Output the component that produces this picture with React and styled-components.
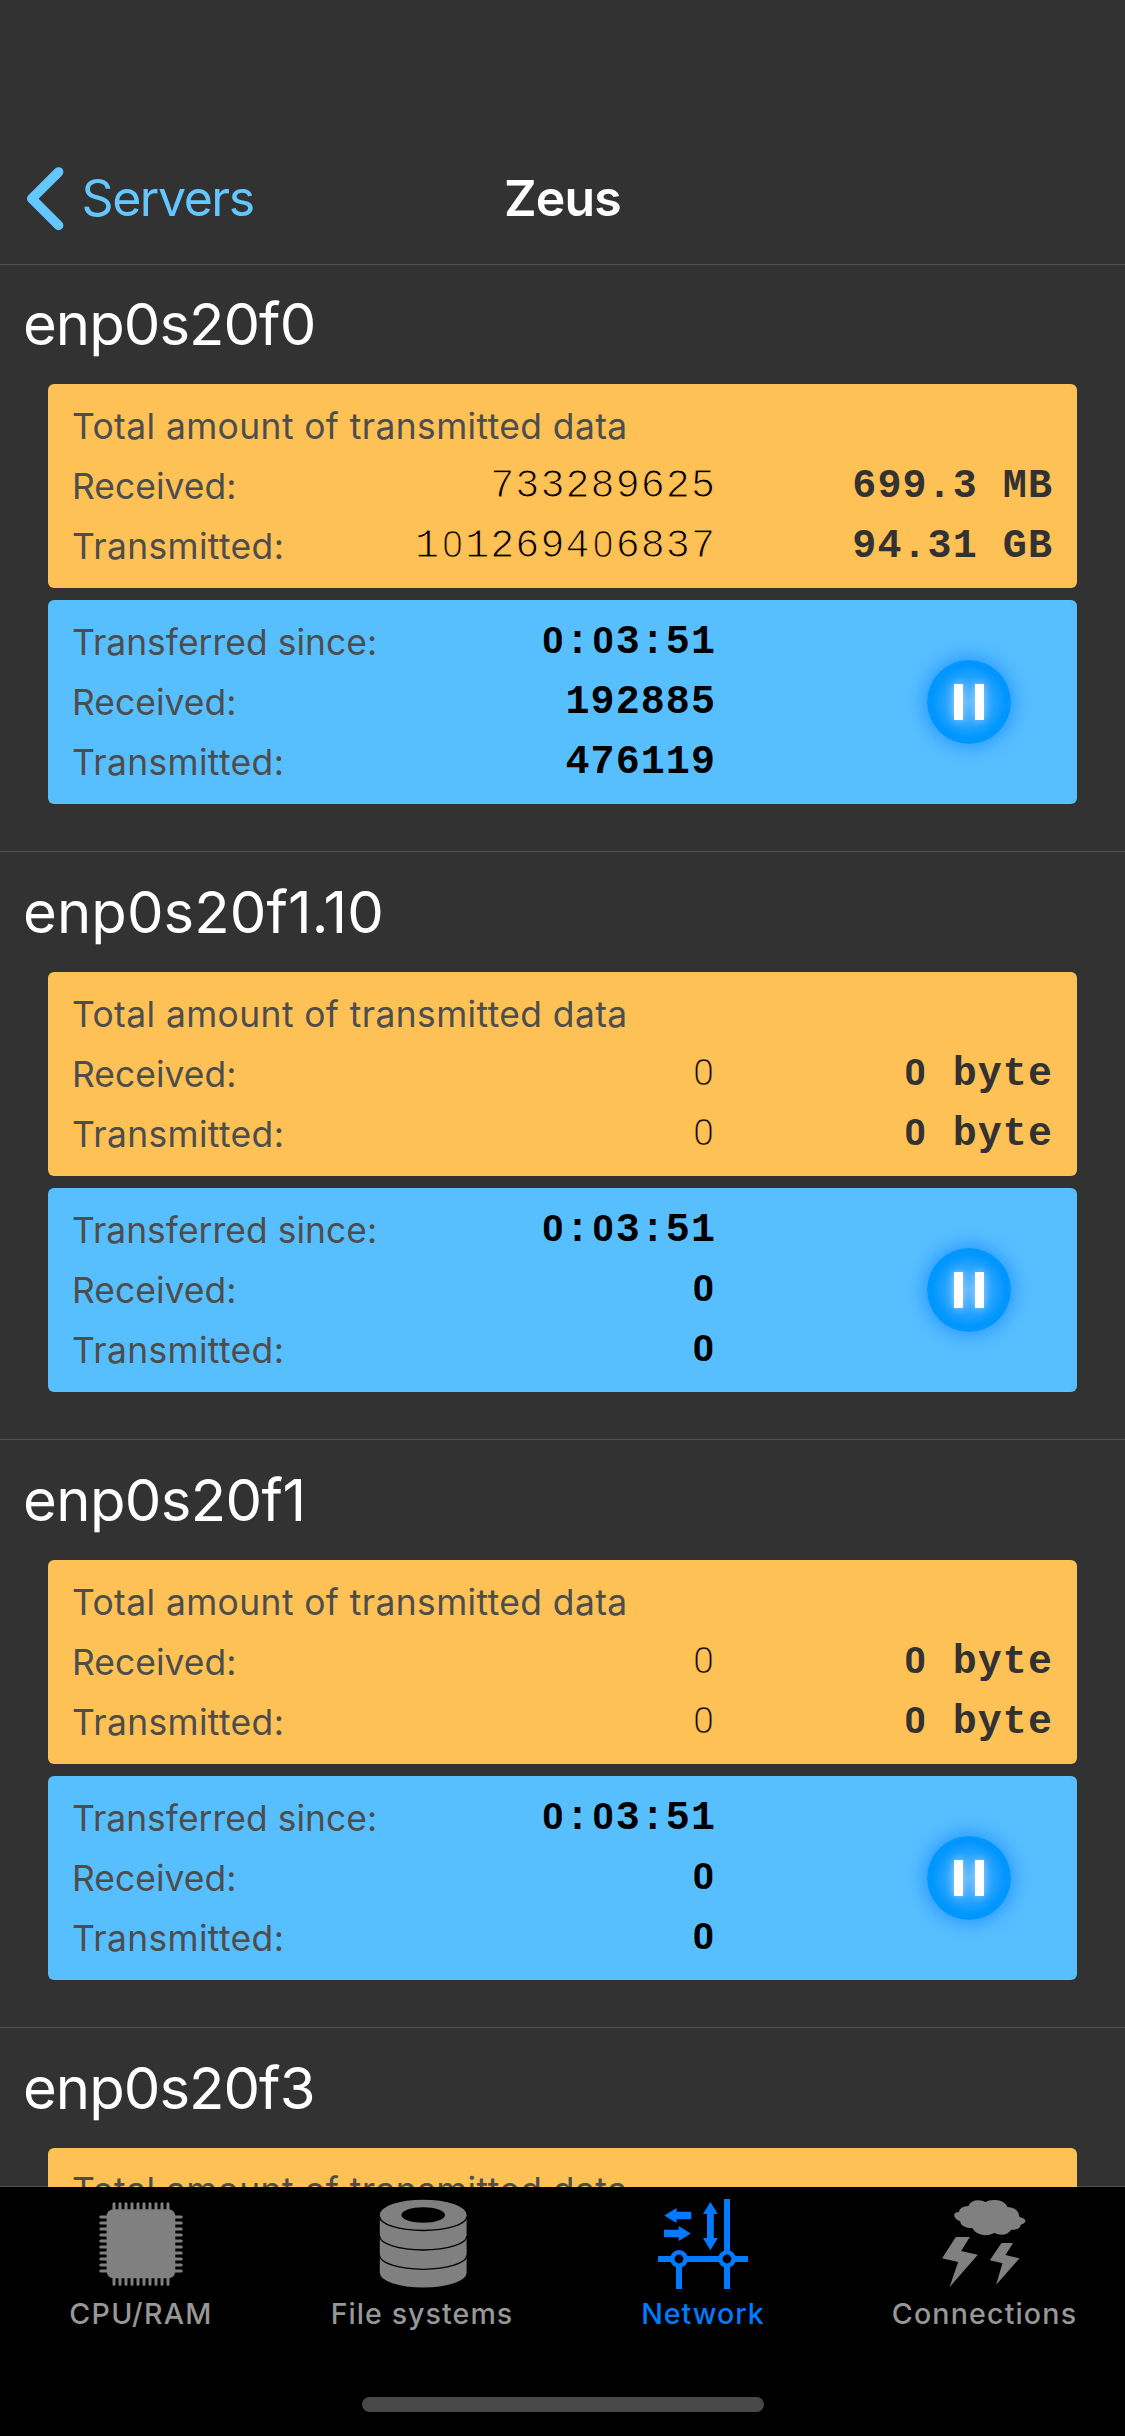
import React from 'react';
import styled, { createGlobalStyle } from 'styled-components';

const GlobalStyle = createGlobalStyle`
  * { box-sizing: border-box; }
  html, body { margin: 0; background: #323232; }
`;

const Screen = styled.div`
  display: flex;
  flex-direction: column;
  width: 1125px;
  height: 2436px;
  overflow: hidden;
  background: #323232;
  color: #fff;
  font-family: Inter, "Liberation Sans", sans-serif;
  white-space: nowrap;
`;

const Header = styled.header`
  flex: none;
  display: grid;
  grid-template-columns: 1fr auto 1fr;
  align-items: center;
  height: 265px;
  padding: 132px 24px 0;
  border-bottom: 1px solid #505050;
`;

const BackButton = styled.a`
  display: flex;
  align-items: center;
  gap: 13.5px;
  color: #64c8ff;
  font-size: 50px;
  line-height: 60px;
  letter-spacing: -1.45px;
`;

const Title = styled.h1`
  margin: 0;
  font-size: 50px;
  line-height: 60px;
  font-weight: 600;
  letter-spacing: -0.8px;
`;

const List = styled.main`
  flex: 1;
  min-height: 0;
  margin-top: -1px;
  overflow: hidden;
  background: linear-gradient(#505050, #505050) bottom / 100% 1px no-repeat;
`;

const Section = styled.section`
  display: flex;
  flex-direction: column;
  height: 588px;
  padding: 0 48px;
  border-bottom: 1px solid #505050;
`;

const Name = styled.h2`
  margin: 0 0 0 -25px;
  height: 120px;
  font-size: 58px;
  line-height: 120px;
  font-weight: 400;
  letter-spacing: ${(p) => p.$track}px;
`;

const Panels = styled.div`
  display: flex;
  flex-direction: column;
  gap: 12px;
`;

const Panel = styled.div`
  display: flex;
  justify-content: space-between;
  align-items: flex-start;
  height: 204px;
  padding: 13px 24px 11px;
  border-radius: 6px;
  background: ${(p) => p.$color};
`;

const Rows = styled.div`
  flex: 1;
`;

const Row = styled.div`
  display: grid;
  grid-template-columns: auto 1fr 337px;
  height: 60px;
  line-height: 60px;
`;

const TransferGrid = styled.div`
  display: grid;
  grid-template-columns: auto 1fr;
  grid-auto-rows: 60px;
  width: 644px;
  line-height: 60px;
`;

const Label = styled.span`
  color: #4d4d4d;
  font-size: 35.4px;
  letter-spacing: ${(p) => p.$track}px;
`;

const Value = styled.span`
  color: ${(p) => (p.$muted ? '#323232' : '#000')};
  font-family: "Liberation Mono", monospace;
  font-size: 40px;
  font-weight: ${(p) => (p.$thin ? 400 : 700)};
  letter-spacing: 1.08px;
  text-align: right;
  white-space: pre;
  -webkit-text-stroke: ${(p) => (p.$thin ? '1.05px #fec155' : '0')};
`;

/* A zero without the inner dot, as wide as the other figures. */
const Zero = styled.span`
  display: inline-block;
  width: 25.1px;
  line-height: 1;
  font-family: Roboto, sans-serif;
  font-size: 37px;
  font-weight: ${(p) => (p.$thin ? 300 : 700)};
  letter-spacing: 0;
  text-align: center;
  -webkit-text-stroke: ${(p) => (p.$thin ? '0.4px #fec155' : '0')};
`;

const PauseButton = styled.button`
  display: flex;
  justify-content: center;
  align-items: center;
  gap: 12px;
  width: 84px;
  height: 84px;
  margin: 47px 42px 0 0;
  padding: 0;
  border: 0;
  border-radius: 50%;
  background: radial-gradient(circle, #5cb6ff 0, #2ea6ff 35%, #0096ff 62%);
  box-shadow: 0 0 22px rgba(0, 120, 255, 0.75);
`;

const PauseBar = styled.span`
  width: 9px;
  height: 36px;
  background: #fff;
  box-shadow: 0 0 9px rgba(255, 255, 255, 0.5);
`;

const TabBar = styled.footer`
  flex: none;
  display: flex;
  flex-direction: column;
  align-items: center;
  height: 249px;
  padding: 12px 0 24px;
  background: #000;
`;

const Tabs = styled.nav`
  display: grid;
  grid-template-columns: 282px 280px 282px 281px;
`;

const Tab = styled.a`
  display: flex;
  flex-direction: column;
  align-items: center;
  gap: 7px;
  color: ${(p) => (p.$active ? '#007aff' : '#808080')};

  svg { display: block; }
`;

const TabLabel = styled.span`
  color: ${(p) => (p.$active ? '#007aff' : '#979797')};
  font-size: 28.6px;
  line-height: 36px;
  font-weight: 450;
  letter-spacing: ${(p) => p.$track}px;
`;

const HomeIndicator = styled.div`
  width: 402px;
  height: 15px;
  margin-top: auto;
  border-radius: 8px;
  background: #484848;
`;

const BackIcon = () => (
  <svg width="44" height="66" viewBox="0 0 44 66" fill="none" stroke="currentColor" strokeWidth="9.6" strokeLinecap="round" strokeLinejoin="round">
    <path d="M34.6 7L7.8 33.7L34.6 60.4" />
  </svg>
);

const PINS = Array.from({ length: 10 }, (_, i) => 18 + i * 6);

const CpuIcon = () => (
  <svg width="90" height="90" viewBox="0 0 90 90">
    <rect x="10.6" y="10.3" width="68.7" height="69" rx="7" fill="currentColor" />
    <g stroke="currentColor" strokeWidth="3" strokeLinecap="round">
      {PINS.map((p) => (
        <path key={p} d={`M${p} 4.8V85.2M4.8 ${p}H85.2`} />
      ))}
    </g>
  </svg>
);

const DiskIcon = () => (
  <svg width="90" height="90" viewBox="0 0 90 90">
    <path
      fill="currentColor"
      d="M2.8 15.8A43.4 15.1 0 0 1 89.6 15.8V73.8A43.4 14.8 0 0 1 2.8 73.8Z"
    />
    <ellipse cx="46.2" cy="16" rx="21.8" ry="7.7" fill="#000" />
    <g fill="none" stroke="#000" strokeWidth="1.3">
      <path d="M2.6 17.5A43.6 14 0 0 0 89.8 17.5" />
      <path d="M2.6 37A43.6 14 0 0 0 89.8 37" />
      <path d="M2.6 56.3A43.6 14 0 0 0 89.8 56.3" />
    </g>
  </svg>
);

const NetworkIcon = () => (
  <svg width="90" height="90" viewBox="0 0 90 90">
    <g stroke="currentColor" strokeWidth="6">
      <path d="M0 60H90M69 0V90M21 60V90" />
      <circle cx="21" cy="60" r="6.7" strokeWidth="4.6" fill="#000" />
      <circle cx="69" cy="60" r="6.7" strokeWidth="4.6" fill="#000" />
    </g>
    <g fill="currentColor">
      <path d="M52.4 3L59.8 15H55.8V39H59.8L52.4 51.3L45 39H49V15H45Z" />
      <path d="M6.3 16.4L18.6 9V12.7H33.2V20.3H18.6V24Z" />
      <path d="M32.8 34.6L20.7 27V30.7H6V38.3H20.7V42Z" />
    </g>
  </svg>
);

const StormIcon = () => (
  <svg width="90" height="90" viewBox="0 0 90 90">
    <g fill="currentColor" transform="translate(-20.2 -9) scale(0.33333)">
      <path d="M121 94Q103 86 103 74Q105 66 117 66Q120 49 146 48Q152 31 176 31Q188 31 197 36Q208 29 226 30Q255 31 263 51Q296 52 299 81Q317 85 317 93Q315 101 303 104Q300 121 274 119Q264 134 246 134Q234 134 224 129Q210 136 196 136Q168 134 158 115Q122 114 121 94Z" />
      <path d="M108 141H150L124 183L174 194L89 292L115 216L67 205Z" />
      <path d="M245 159H280L257 195L299 205L229 284L248 220L210 211Z" />
    </g>
  </svg>
);

function Figures({ text, thin, muted }) {
  return (
    <Value $thin={thin} $muted={muted}>
      {text.split(/(0)/).map((part, i) => (part === '0' ? <Zero key={i} $thin={thin}>0</Zero> : part))}
    </Value>
  );
}

const INTERFACES = [
  {
    name: 'enp0s20f0',
    track: -0.95,
    total: { rx: '733289625', rxSize: '699.3 MB', tx: '101269406837', txSize: '94.31 GB' },
    since: { time: '0:03:51', rx: '192885', tx: '476119' },
  },
  {
    name: 'enp0s20f1.10',
    track: 0.1,
    total: { rx: '0', rxSize: '0 byte', tx: '0', txSize: '0 byte' },
    since: { time: '0:03:51', rx: '0', tx: '0' },
  },
  {
    name: 'enp0s20f1',
    track: -0.6,
    total: { rx: '0', rxSize: '0 byte', tx: '0', txSize: '0 byte' },
    since: { time: '0:03:51', rx: '0', tx: '0' },
  },
  { name: 'enp0s20f3', track: -0.95 },
];

function TotalPanel({ total }) {
  return (
    <Panel $color="#fec155">
      <Rows>
        <Row>
          <Label $track={0.41}>Total amount of transmitted data</Label>
        </Row>
        {total && (
          <>
            <Row>
              <Label $track={0.05}>Received:</Label>
              <Figures text={total.rx} thin />
              <Figures text={total.rxSize} muted />
            </Row>
            <Row>
              <Label $track={0.38}>Transmitted:</Label>
              <Figures text={total.tx} thin />
              <Figures text={total.txSize} muted />
            </Row>
          </>
        )}
      </Rows>
    </Panel>
  );
}

function SincePanel({ since }) {
  return (
    <Panel $color="#58bfff">
      <TransferGrid>
        <Label $track={0.04}>Transferred since:</Label>
        <Figures text={since.time} />
        <Label $track={0.05}>Received:</Label>
        <Figures text={since.rx} />
        <Label $track={0.38}>Transmitted:</Label>
        <Figures text={since.tx} />
      </TransferGrid>
      <PauseButton aria-label="Pause">
        <PauseBar />
        <PauseBar />
      </PauseButton>
    </Panel>
  );
}

const TABS = [
  { label: 'CPU/RAM', Icon: CpuIcon, track: 1.3 },
  { label: 'File systems', Icon: DiskIcon, track: 1.05 },
  { label: 'Network', Icon: NetworkIcon, track: 1 },
  { label: 'Connections', Icon: StormIcon, track: 1.15 },
];

export default function App() {
  return (
    <Screen>
      <GlobalStyle />
      <Header>
        <BackButton>
          <BackIcon />
          Servers
        </BackButton>
        <Title>Zeus</Title>
      </Header>
      <List>
        {INTERFACES.map(({ name, track, total, since }) => (
          <Section key={name}>
            <Name $track={track}>{name}</Name>
            <Panels>
              <TotalPanel total={total} />
              {since && <SincePanel since={since} />}
            </Panels>
          </Section>
        ))}
      </List>
      <TabBar>
        <Tabs>
          {TABS.map(({ label, Icon, track }) => (
            <Tab key={label} $active={label === 'Network'}>
              <Icon />
              <TabLabel $active={label === 'Network'} $track={track}>{label}</TabLabel>
            </Tab>
          ))}
        </Tabs>
        <HomeIndicator />
      </TabBar>
    </Screen>
  );
}
